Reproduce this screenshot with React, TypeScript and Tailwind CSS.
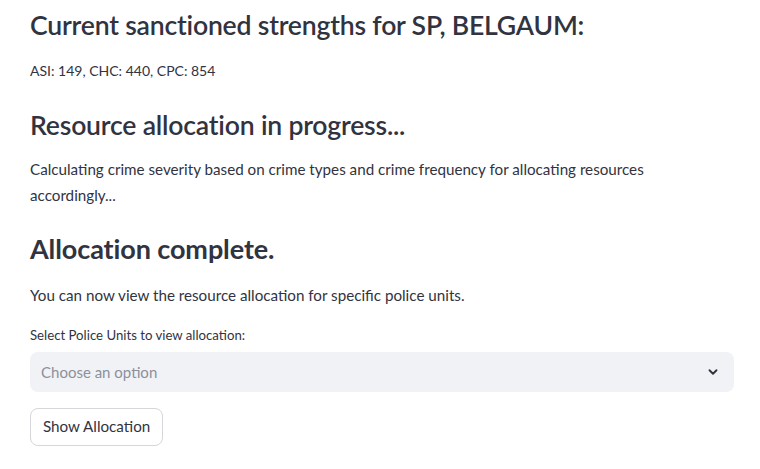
import React from 'react';

const App: React.FC = () => {
  return (
    <div className="min-h-screen bg-white text-[#31333f] font-['Lato','Liberation_Sans',sans-serif]">
      <div className="px-[30px] pt-[5px] w-[764px]">
        <h2 className="text-[26.6px] font-semibold leading-[36px] tracking-[-0.2px] py-[2px]">
          Current sanctioned strengths for SP, BELGAUM:
        </h2>
        <p className="text-[14px] mt-[16px] leading-[20px]">ASI: 149, CHC: 440, CPC: 854</p>

        <h2 className="text-[26.6px] font-semibold leading-[36px] tracking-[-0.2px] mt-[26px]">
          Resource allocation in progress...
        </h2>
        <p className="text-[15.2px] leading-[26px] mt-[13px] w-[660px]">
          Calculating crime severity based on crime types and crime frequency for allocating resources accordingly...
        </p>

        <h2 className="text-[27px] font-bold leading-[36px] tracking-[-0.1px] mt-[23px]">Allocation complete.</h2>
        <p className="text-[15.2px] leading-[26px] mt-[15px]">
          You can now view the resource allocation for specific police units.
        </p>

        <div className="mt-[17px] w-[704px]">
          <label className="block text-[13.2px] leading-[20px] mb-[7px]">Select Police Units to view allocation:</label>
          <div className="flex items-center justify-between h-[40px] rounded-lg bg-[#f0f2f6] pl-[11px] pr-[14px]">
            <span className="text-[15px] text-[#8d8f9b]">Choose an option</span>
            <svg width="14" height="14" viewBox="0 0 24 24" fill="none" stroke="#31333f" strokeWidth="3.2" strokeLinecap="round" strokeLinejoin="round">
              <path d="M6 9l6 6 6-6" />
            </svg>
          </div>
        </div>

        <button className="mt-[16px] h-[38px] px-[12px] rounded-lg border border-[#d5d6d9] bg-white text-[15.2px] leading-none">
          Show Allocation
        </button>
      </div>
    </div>
  );
};

export default App;
